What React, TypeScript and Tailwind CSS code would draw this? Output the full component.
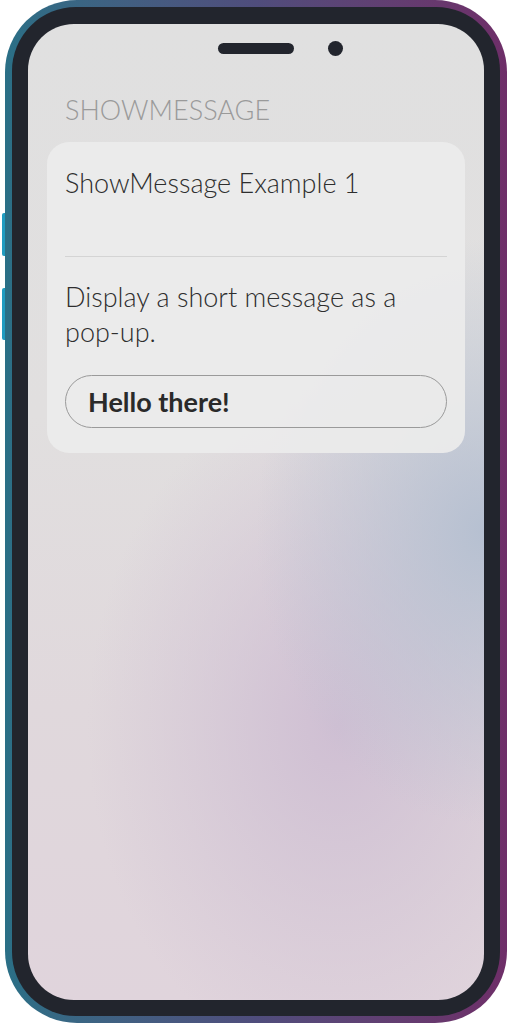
export default function App() {
  return (
    <div className="relative w-[512px] h-[1024px] bg-white font-['Lato','Noto_Sans',sans-serif]">
      {/* side buttons */}
      <div className="absolute left-[2px] top-[213px] w-[6px] h-[43px] rounded-l-[2px] bg-[#1f9cc0]" />
      <div className="absolute left-[2px] top-[288px] w-[6px] h-[52px] rounded-l-[2px] bg-[#1f9cc0]" />

      {/* phone */}
      <div className="relative ml-[5px] w-[502px] h-[1023px] rounded-[72px] bg-gradient-to-r from-[#2a6f86] via-[#4f4d7c] to-[#6e2e68] p-[7px]">
        <div className="h-full rounded-[64px] bg-[#22252d] pt-[17px] pb-[16px] px-[16px]">
          <div className="relative h-full rounded-[46px] overflow-hidden bg-[radial-gradient(ellipse_50%_30%_at_100%_52%,#b6c0d1_0%,transparent_100%),radial-gradient(ellipse_55%_35%_at_68%_72%,#cfbfd3_0%,transparent_100%),linear-gradient(180deg,#e0e0e0_0%,#e1dfdf_40%,#e0d8dc_70%,#e0d4dc_100%)] px-[19px]">
            {/* notch */}
            <div className="flex items-center h-[48px] pt-[1px]">
              <div className="ml-[171px] w-[76px] h-[11px] rounded-full bg-[#22252d]" />
              <div className="ml-[34px] w-[15px] h-[15px] rounded-full bg-[#22252d]" />
            </div>

            <div className="pt-[20px] pl-[18px] text-[27px] font-light leading-[35px] text-[#9a9a9a]">
              SHOWMESSAGE
            </div>

            <div className="mt-[15px] rounded-[22px] bg-[#ebebeb]/95 px-[18px] pt-[23px] pb-[25px]">
              <div className="h-[91px] text-[27px] font-light leading-[35px] text-[#2e2e2e]">
                ShowMessage Example 1
              </div>
              <div className="h-px bg-[#d4d4d4]" />
              <p className="mt-[22px] text-[27px] font-light leading-[35px] text-[#2e2e2e]">
                Display a short message as a pop-up.
              </p>
              <button className="mt-[26px] w-full h-[53px] rounded-full border border-[#9a9a9a] text-left pl-[22px] text-[27px] leading-[35px] font-bold text-[#2a2a2a]">
                Hello there!
              </button>
            </div>
          </div>
        </div>
      </div>
    </div>
  )
}
